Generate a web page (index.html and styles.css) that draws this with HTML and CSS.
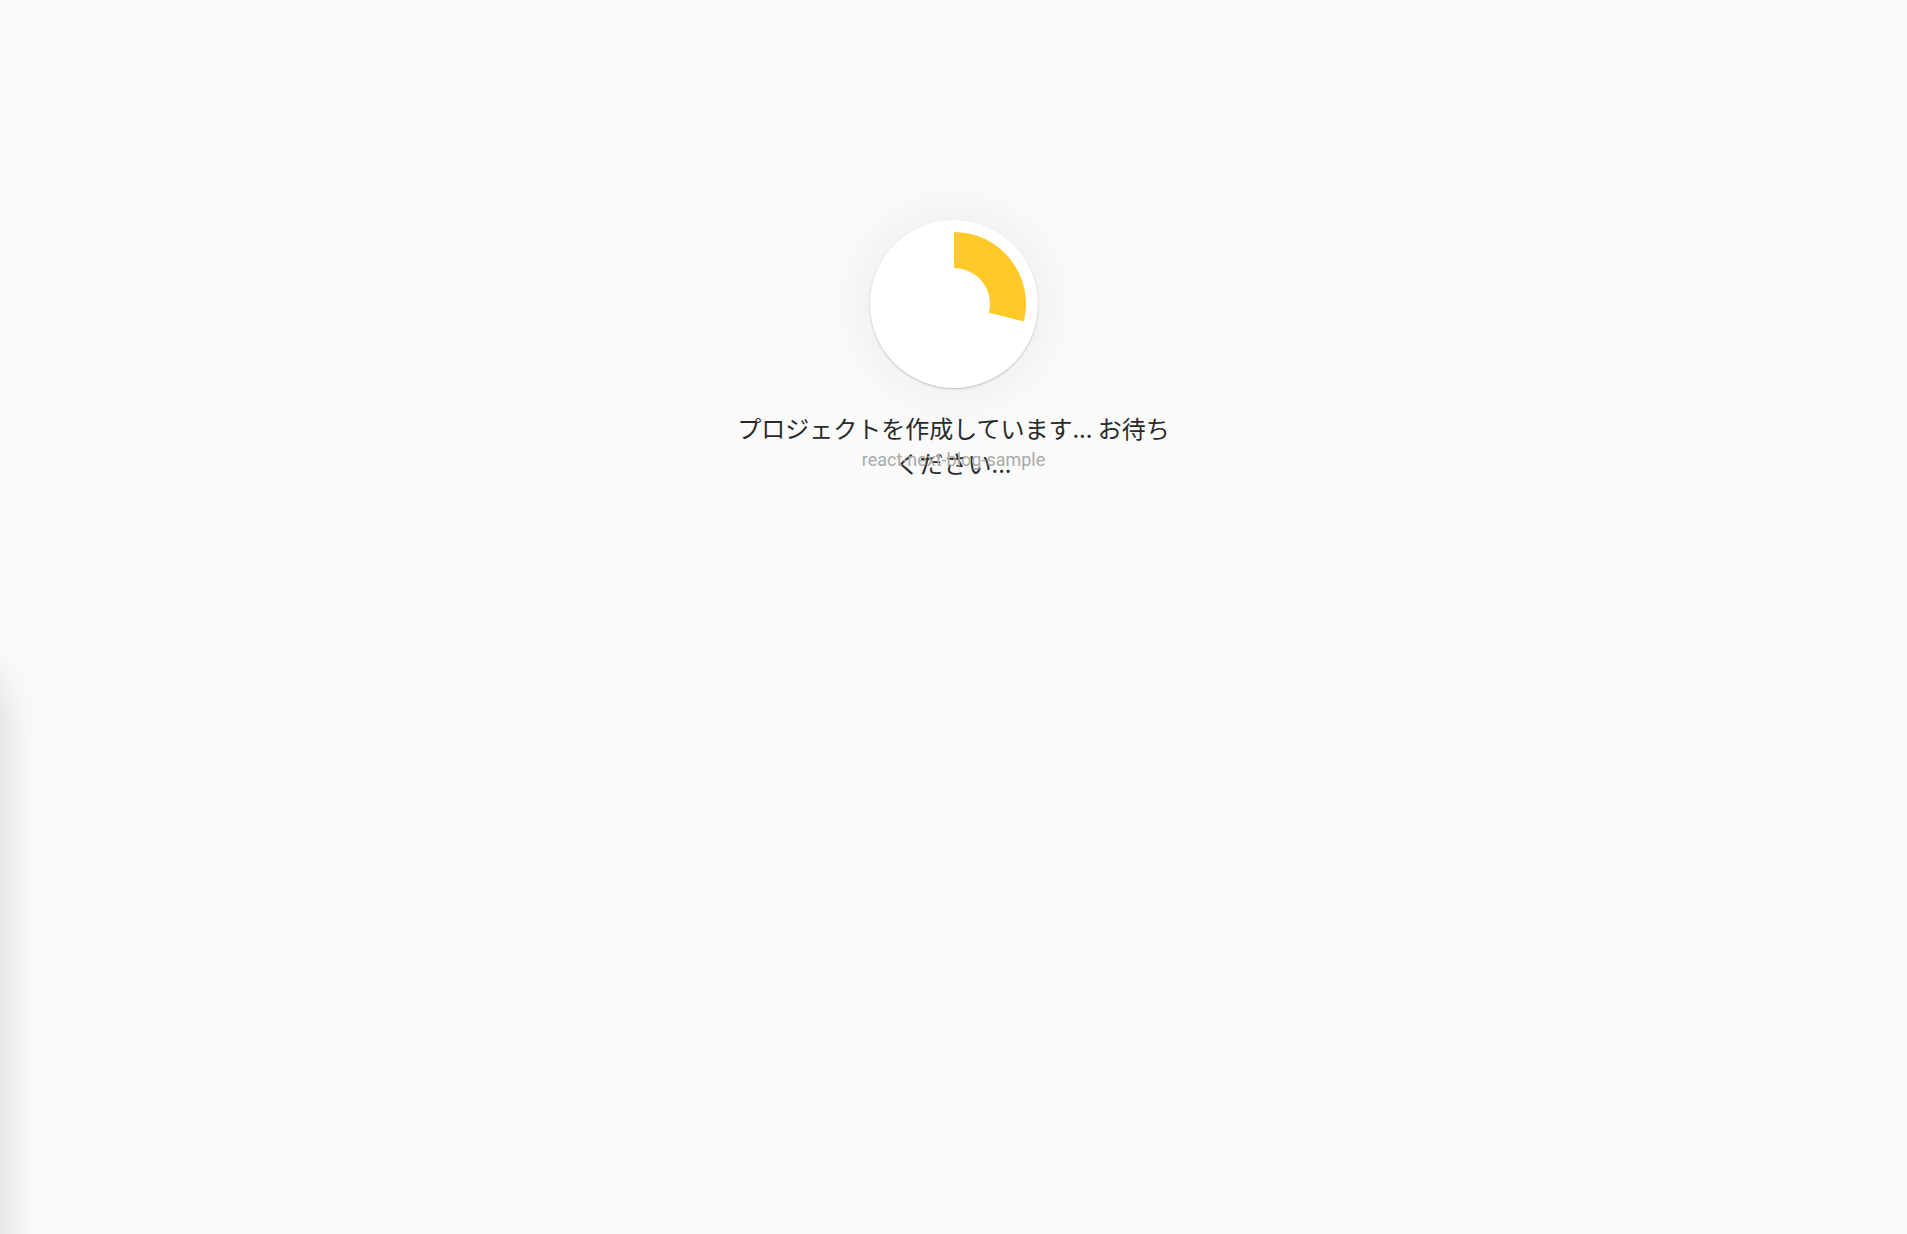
FILE: index.html
```html
<!DOCTYPE html>
<html lang="ja">
<head>
<meta charset="utf-8">
<title>react-next-blog-sample</title>
<link rel="stylesheet" href="styles.css">
</head>
<body>
<div class="drawer-shadow"></div>
<main class="loading">
  <div class="spinner">
    <svg class="wedge" width="168" height="168" viewBox="0 0 168 168">
      <path d="M84 12 A72 72 0 0 1 153.86 101.42 L118.93 92.71 A36 36 0 0 0 84 48 Z" fill="#ffca28"/>
    </svg>
  </div>
  <div class="title-box">
    <p class="title">プロジェクトを作成しています... お待ちください...</p>
  </div>
  <p class="subtitle">react-next-blog-sample</p>
</main>
</body>
</html>
```

FILE: styles.css
```css
html, body {
  margin: 0;
  padding: 0;
  height: 100%;
  background: #fafafa;
  overflow: hidden;
}
body {
  font-family: Roboto, "Noto Sans CJK JP", sans-serif;
  position: relative;
}
.drawer-shadow {
  position: absolute;
  left: -300px;
  top: 660px;
  width: 300px;
  height: 800px;
  background: #fafafa;
  box-shadow: 0 0 46px rgba(0, 0, 0, 0.16);
  border-radius: 0 60px 0 0;
}
.loading {
  display: flex;
  flex-direction: column;
  align-items: center;
  padding-top: 220px;
}
.spinner {
  width: 168px;
  height: 168px;
  border-radius: 50%;
  background: #fff;
  box-shadow: 0 1px 2px rgba(0, 0, 0, 0.22), 0 0 60px rgba(0, 0, 0, 0.07);
}
.wedge {
  display: block;
}
.title-box {
  margin-top: 22px;
  width: 444px;
  height: 35px;
}
.title {
  margin: 0;
  font-family: "Noto Sans CJK JP", sans-serif;
  font-size: 24px;
  line-height: 35px;
  color: #2a2a2a;
  text-align: center;
}
.subtitle {
  margin: 4px 0 0;
  font-family: Roboto, sans-serif;
  font-size: 18px;
  line-height: 21px;
  color: #aaa;
}
```
